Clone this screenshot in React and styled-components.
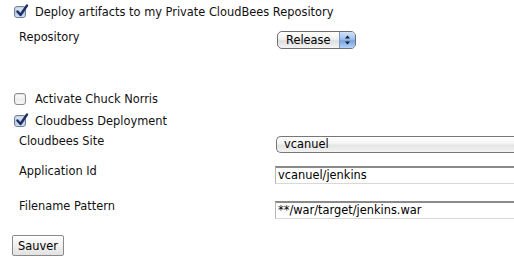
import React from "react";
import styled, { createGlobalStyle } from "styled-components";

const Global = createGlobalStyle`
  html, body { margin: 0; padding: 0; background: #fff; overflow: hidden; }
  body { font-family: "DejaVu Sans", Verdana, sans-serif; font-size: 11.4px; color: #111; }
`;

const Form = styled.div`
  display: flex;
  flex-direction: column;
  width: 514px;
  height: 266px;
`;

const CheckRow = styled.label`
  display: flex;
  align-items: center;
  gap: 9px;
  height: 22px;
  padding-left: 14px;
  margin-top: ${(p) => p.$mt || 0}px;
  white-space: nowrap;
`;

const Box = styled.span`
  position: relative;
  box-sizing: border-box;
  width: 12px;
  height: 12px;
  border: 1px solid ${(p) => (p.$checked ? "#6f7f9a" : "#8c8c8c")};
  border-radius: 3px;
  background: ${(p) =>
    p.$checked
      ? "linear-gradient(#e8eefa, #b9c9e6 55%, #d6e1f4)"
      : "linear-gradient(#ffffff, #ececec 55%, #f7f7f7)"};
  box-shadow: inset 0 1px 1px rgba(0, 0, 0, 0.12);
  flex: none;

  svg {
    position: absolute;
    left: 0px;
    top: -3px;
  }
`;

const FieldRow = styled.div`
  display: grid;
  grid-template-columns: 256px 1fr;
  align-items: start;
  padding-left: 19px;
  height: ${(p) => p.$h}px;
  margin-top: ${(p) => p.$mt || 0}px;
`;

const Label = styled.div`
  line-height: 15px;
  padding-top: ${(p) => p.$pt || 0}px;
  white-space: nowrap;
`;

const Control = styled.div`
  padding-top: ${(p) => p.$pt || 0}px;
  padding-left: ${(p) => p.$pl || 0}px;
  min-width: 0;
`;

const PopUp = styled.div`
  position: relative;
  box-sizing: border-box;
  display: flex;
  align-items: center;
  width: 79px;
  height: 18px;
  border: 1px solid #6e6e6e;
  border-radius: 5px;
  background: linear-gradient(#ffffff, #f1f1f1 45%, #dedede 55%, #f4f4f4);
  padding-left: 8px;
  color: #000;
  overflow: hidden;
`;

const Stepper = styled.span`
  position: absolute;
  right: 0;
  top: 0;
  bottom: 0;
  width: 15px;
  border-left: 1px solid #7f95b8;
  background: linear-gradient(#d3e3f8, #9ec0ee 45%, #74a3e6 55%, #b6d2f6);
  display: flex;
  align-items: center;
  justify-content: center;
`;

const WideSelect = styled.div`
  box-sizing: border-box;
  width: 260px;
  height: 17px;
  border: 1px solid #777;
  border-right: none;
  border-radius: 5px 0 0 5px;
  background: linear-gradient(#ffffff, #f4f4f4 45%, #e4e4e4 55%, #f3f3f3);
  padding-left: 7px;
  line-height: 15px;
  color: #000;
`;

const TextInput = styled.div`
  box-sizing: border-box;
  width: 260px;
  height: 18px;
  border-top: 2px solid #8a8a8a;
  border-left: 1px solid #b5b5b5;
  border-bottom: 1px solid #d8d8d8;
  background: #fff;
  padding-left: 2px;
  line-height: 15px;
  color: #000;
  white-space: nowrap;
`;

const ButtonRow = styled.div`
  padding-left: 12px;
  margin-top: ${(p) => p.$mt || 0}px;
`;

const Button = styled.button`
  box-sizing: border-box;
  width: 52px;
  height: 21px;
  border: 1px solid #8a8a8a;
  border-radius: 2px;
  background: linear-gradient(#ffffff, #f0f0f0 50%, #e2e2e2);
  font-family: "DejaVu Sans", Verdana, sans-serif;
  font-size: 11.4px;
  color: #000;
  padding: 0;
`;

const Check = ({ checked }) => (
  <Box $checked={checked}>
    {checked && (
      <svg width="14" height="14" viewBox="0 0 14 14">
        <path
          d="M2.5 7.5 L5.5 11 L12 1.5"
          fill="none"
          stroke="#1d2f63"
          strokeWidth="2.4"
          strokeLinecap="round"
          strokeLinejoin="round"
        />
      </svg>
    )}
  </Box>
);

export default function App() {
  return (
    <>
      <Global />
      <Form>
        <CheckRow $mt={1}>
          <Check checked />
          Deploy artifacts to my Private CloudBees Repository
        </CheckRow>
        <FieldRow $h={22} $mt={6}>
          <Label $pt={1}>Repository</Label>
          <Control $pt={2} $pl={2}>
            <PopUp>
              Release
              <Stepper>
                <svg width="7" height="10" viewBox="0 0 7 10">
                  <path d="M3.5 0.5 L6 3.5 L1 3.5 Z" fill="#1a1a1a" />
                  <path d="M3.5 9.5 L6 6.5 L1 6.5 Z" fill="#1a1a1a" />
                </svg>
              </Stepper>
            </PopUp>
          </Control>
        </FieldRow>
        <CheckRow $mt={37}>
          <Check />
          Activate Chuck Norris
        </CheckRow>
        <CheckRow>
          <Check checked />
          Cloudbess Deployment
        </CheckRow>
        <FieldRow $h={30}>
          <Label $pt={2}>Cloudbees Site</Label>
          <Control $pt={4} $pl={1}>
            <WideSelect>vcanuel</WideSelect>
          </Control>
        </FieldRow>
        <FieldRow $h={35}>
          <Label $pt={2}>Application Id</Label>
          <Control $pt={4}>
            <TextInput>vcanuel/jenkins</TextInput>
          </Control>
        </FieldRow>
        <FieldRow $h={35}>
          <Label $pt={2}>Filename Pattern</Label>
          <Control $pt={4}>
            <TextInput>**/war/target/jenkins.war</TextInput>
          </Control>
        </FieldRow>
        <ButtonRow $mt={3}>
          <Button>Sauver</Button>
        </ButtonRow>
      </Form>
    </>
  );
}
